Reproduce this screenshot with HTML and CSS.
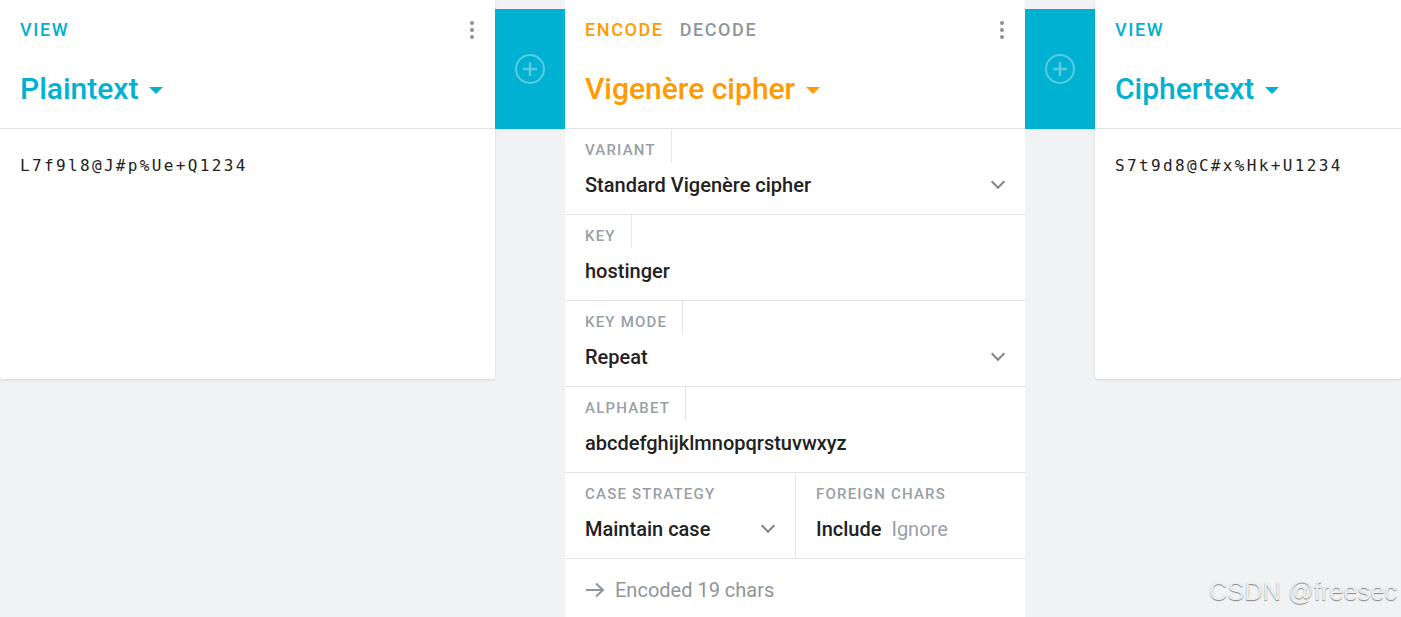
FILE: index.html
```html
<!DOCTYPE html>
<html>
<head>
<meta charset="utf-8">
<link rel="stylesheet" href="styles.css">
</head>
<body>
<div class="app">
  <section class="brick brick-view">
    <header class="brick-header">
      <div class="header-top">
        <span class="tab tab-view">VIEW</span>
        <span class="menu"><i></i><i></i><i></i></span>
      </div>
      <div class="title title-view">Plaintext <span class="caret"></span></div>
    </header>
    <div class="brick-body">
      <div class="mono">L7f9l8@J#p%Ue+Q1234</div>
    </div>
  </section>

  <div class="add">
    <svg width="32" height="32" viewBox="0 0 32 32"><circle cx="16" cy="16" r="14" fill="none" stroke="rgba(255,255,255,0.35)" stroke-width="2"/><path d="M16 9v14M9 16h14" stroke="rgba(255,255,255,0.35)" stroke-width="2.4" fill="none"/></svg>
  </div>

  <section class="brick brick-enc">
    <header class="brick-header">
      <div class="header-top">
        <span class="tab tab-enc">ENCODE</span>
        <span class="tab tab-dec">DECODE</span>
        <span class="menu"><i></i><i></i><i></i></span>
      </div>
      <div class="title title-enc">Vigenère cipher <span class="caret"></span></div>
    </header>
    <div class="field">
      <div class="label">VARIANT</div>
      <div class="value">Standard Vigenère cipher <span class="chev"></span></div>
    </div>
    <div class="field">
      <div class="label">KEY</div>
      <div class="value">hostinger</div>
    </div>
    <div class="field">
      <div class="label">KEY MODE</div>
      <div class="value">Repeat <span class="chev"></span></div>
    </div>
    <div class="field">
      <div class="label">ALPHABET</div>
      <div class="value">abcdefghijklmnopqrstuvwxyz</div>
    </div>
    <div class="field-row">
      <div class="field half">
        <div class="label nob">CASE STRATEGY</div>
        <div class="value">Maintain case <span class="chev"></span></div>
      </div>
      <div class="field half">
        <div class="label nob">FOREIGN CHARS</div>
        <div class="value">Include <span class="opt">Ignore</span></div>
      </div>
    </div>
    <div class="status">
      <svg width="20" height="16" viewBox="0 0 20 16"><path d="M1 8h17M11 1.5l7 6.5-7 6.5" stroke="#8f959b" stroke-width="2" fill="none"/></svg>
      <span>Encoded 19 chars</span>
    </div>
  </section>

  <div class="add">
    <svg width="32" height="32" viewBox="0 0 32 32"><circle cx="16" cy="16" r="14" fill="none" stroke="rgba(255,255,255,0.35)" stroke-width="2"/><path d="M16 9v14M9 16h14" stroke="rgba(255,255,255,0.35)" stroke-width="2.4" fill="none"/></svg>
  </div>

  <section class="brick brick-view brick-right">
    <header class="brick-header">
      <div class="header-top">
        <span class="tab tab-view">VIEW</span>
      </div>
      <div class="title title-view">Ciphertext <span class="caret"></span></div>
    </header>
    <div class="brick-body">
      <div class="mono">S7t9d8@C#x%Hk+U1234</div>
    </div>
  </section>
  <div class="watermark">CSDN @freesec</div>
</div>
</body>
</html>
```
FILE: styles.css
```css
* { box-sizing: border-box; }
html, body { margin: 0; padding: 0; }
body {
  background: #f1f2f4;
  font-family: Roboto, "Noto Sans", sans-serif;
  width: 1401px;
  height: 617px;
  overflow: hidden;
}
.app {
  display: flex;
  align-items: flex-start;
  height: 617px;
  position: relative;
}
.brick {
  background: #fff;
  box-shadow: 0 1px 3px rgba(0,0,0,0.12);
}
.brick-view {
  width: 495px;
  height: 379px;
  border-radius: 0 0 3px 3px;
}
.brick-right {
  width: 306px;
  flex: none;
}
.brick-enc {
  width: 460px;
  height: 617px;
  box-shadow: none;
}
.brick-header {
  height: 129px;
  border-bottom: 1px solid #e2e5e8;
  padding: 19px 20px 0 20px;
}
.header-top {
  display: flex;
  align-items: center;
  height: 22px;
  gap: 16px;
}
.tab {
  font-size: 18px;
  font-weight: 500;
  letter-spacing: 1.6px;
  line-height: 22px;
}
.tab-view { color: #00b1d2; }
.tab-enc { color: #ff9a00; }
.tab-dec { color: #8e969d; }
.menu {
  margin-left: auto;
  display: flex;
  flex-direction: column;
  gap: 3px;
  padding-right: 1px;
  margin-top: -1px;
}
.menu i {
  display: block;
  width: 4px;
  height: 4px;
  border-radius: 50%;
  background: #8b9197;
}
.title {
  margin-top: 28px;
  font-size: 30px;
  font-weight: 500;
  line-height: 40px;
  display: flex;
  align-items: center;
  gap: 2px;
}
.title-view { color: #00b1d2; }
.title-enc { color: #ff9a00; }
.caret {
  display: inline-block;
  width: 0;
  height: 0;
  border-left: 7px solid transparent;
  border-right: 7px solid transparent;
  border-top: 7px solid currentColor;
  margin-left: 9px;
  margin-top: 2px;
}
.brick-body {
  padding: 26px 20px;
}
.mono {
  font-family: "DejaVu Sans Mono", monospace;
  font-size: 16px;
  letter-spacing: 2.35px;
  color: #222;
  line-height: 22px;
}
.add {
  width: 70px;
  height: 120px;
  margin-top: 9px;
  background: #00b1d2;
  display: flex;
  align-items: center;
  justify-content: center;
  flex: none;
}
.field {
  height: 86px;
  border-bottom: 1px solid #e2e5e8;
  padding: 0 20px;
}
.label {
  display: inline-block;
  font-size: 15px;
  font-weight: 500;
  letter-spacing: 1.2px;
  color: #999fa5;
  padding: 13px 15px 4px 0;
  line-height: 16px;
  border-right: 1px solid #e2e5e8;
}
.label.nob { border-right: none; }
.value {
  display: flex;
  align-items: center;
  font-size: 20px;
  font-weight: 500;
  color: #222;
  line-height: 26px;
  margin-top: 10px;
}
.chev {
  margin-left: auto;
  margin-right: 2px;
  width: 10px;
  height: 10px;
  border-right: 2.5px solid #7d8389;
  border-bottom: 2.5px solid #7d8389;
  transform: rotate(45deg);
  margin-top: -6px;
}
.opt {
  color: #9aa0a6;
  margin-left: 10px;
  font-weight: 400;
}
.field-row {
  display: flex;
}
.field.half {
  width: 50%;
}
.field.half + .field.half {
  border-left: 1px solid #e2e5e8;
}
.status {
  display: flex;
  align-items: center;
  gap: 10px;
  padding: 19px 20px;
  font-size: 20px;
  color: #8f959b;
}
.watermark {
  position: absolute;
  right: 4px;
  bottom: 11px;
  font-family: "Liberation Sans", Arial, sans-serif;
  font-size: 25.4px;
  color: #eceef0;
  text-shadow: 0 1px 1px rgba(0,0,0,0.45);
}
```
